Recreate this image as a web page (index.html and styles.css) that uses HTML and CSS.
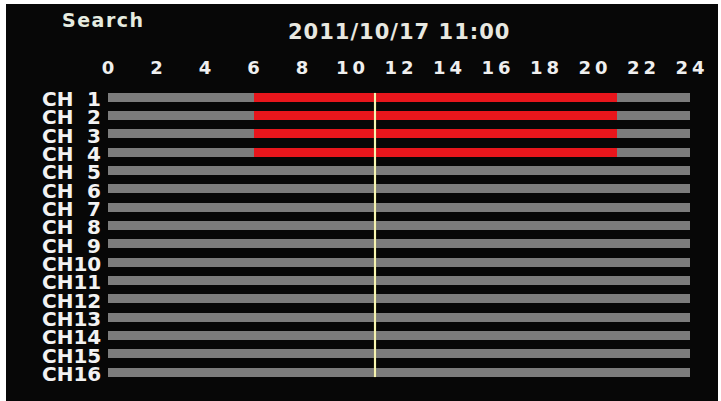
FILE: index.html
```html
<!DOCTYPE html>
<html>
<head>
<meta charset="utf-8">
<link rel="stylesheet" href="styles.css">
</head>
<body>
<div class="screen">
  <div class="header">
    <div class="title">Search</div>
    <div class="date">2011/10/17 11:00</div>
  </div>
  <div class="hours">
    <span class="hour">0</span><span class="hour">2</span><span class="hour">4</span><span class="hour">6</span><span class="hour">8</span><span class="hour">10</span><span class="hour">12</span><span class="hour">14</span><span class="hour">16</span><span class="hour">18</span><span class="hour">20</span><span class="hour">22</span><span class="hour">24</span>
  </div>
  <div class="chart">
    <div class="row"><div class="label"><span>CH</span><span>1</span></div><div class="track"><div class="rec"></div></div></div>
    <div class="row"><div class="label"><span>CH</span><span>2</span></div><div class="track"><div class="rec"></div></div></div>
    <div class="row"><div class="label"><span>CH</span><span>3</span></div><div class="track"><div class="rec"></div></div></div>
    <div class="row"><div class="label"><span>CH</span><span>4</span></div><div class="track"><div class="rec"></div></div></div>
    <div class="row"><div class="label"><span>CH</span><span>5</span></div><div class="track"></div></div>
    <div class="row"><div class="label"><span>CH</span><span>6</span></div><div class="track"></div></div>
    <div class="row"><div class="label"><span>CH</span><span>7</span></div><div class="track"></div></div>
    <div class="row"><div class="label"><span>CH</span><span>8</span></div><div class="track"></div></div>
    <div class="row"><div class="label"><span>CH</span><span>9</span></div><div class="track"></div></div>
    <div class="row"><div class="label"><span>CH</span><span>10</span></div><div class="track"></div></div>
    <div class="row"><div class="label"><span>CH</span><span>11</span></div><div class="track"></div></div>
    <div class="row"><div class="label"><span>CH</span><span>12</span></div><div class="track"></div></div>
    <div class="row"><div class="label"><span>CH</span><span>13</span></div><div class="track"></div></div>
    <div class="row"><div class="label"><span>CH</span><span>14</span></div><div class="track"></div></div>
    <div class="row"><div class="label"><span>CH</span><span>15</span></div><div class="track"></div></div>
    <div class="row"><div class="label"><span>CH</span><span>16</span></div><div class="track"></div></div>
  </div>
  <div class="cursor"></div>
</div>
</body>
</html>
```
FILE: styles.css
```css
html, body {
  margin: 0;
  padding: 0;
  background: #ffffff;
}
.screen {
  position: relative;
  margin: 4px 3px 0 6px;
  height: 397px;
  background: #070707;
  font-family: "DejaVu Sans", "Liberation Sans", Arial, sans-serif;
  font-weight: bold;
  color: #ececec;
  overflow: hidden;
}
.header {
  display: flex;
  height: 54px;
}
.title {
  box-sizing: border-box;
  width: 282px;
  padding-left: 56px;
  padding-top: 5px;
  font-size: 19px;
  line-height: 22px;
  letter-spacing: 1.5px;
  color: #e6ece0;
}
.date {
  padding-top: 16px;
  font-size: 21px;
  line-height: 24px;
  letter-spacing: 1px;
  color: #e8e8e0;
}
.hours {
  display: flex;
  height: 30px;
  margin-left: 77.75px;
}
.hour {
  box-sizing: border-box;
  width: 48.5px;
  padding-left: 4px;
  text-align: center;
  font-size: 18px;
  line-height: 20px;
  letter-spacing: 4px;
  color: #efefef;
}
.chart {
  display: flex;
  flex-direction: column;
}
.row {
  display: flex;
  align-items: flex-start;
  height: 18.33px;
}
.label {
  box-sizing: border-box;
  display: flex;
  justify-content: space-between;
  width: 102px;
  padding-left: 36px;
  padding-right: 7px;
  padding-top: 2px;
  font-size: 20px;
  line-height: 18.33px;
  color: #f2f2f2;
}
.track {
  display: flex;
  width: 582px;
  height: 9px;
  margin-top: 4.67px;
  background: #7c7c7c;
}
.rec {
  margin-left: 25%;
  width: 62.5%;
  height: 100%;
  background: #e8161c;
}
.cursor {
  position: absolute;
  left: 368px;
  top: 89px;
  width: 2px;
  height: 284px;
  background: #f6f4b0;
  box-shadow: 0 0 1px #c8c060;
}
```
